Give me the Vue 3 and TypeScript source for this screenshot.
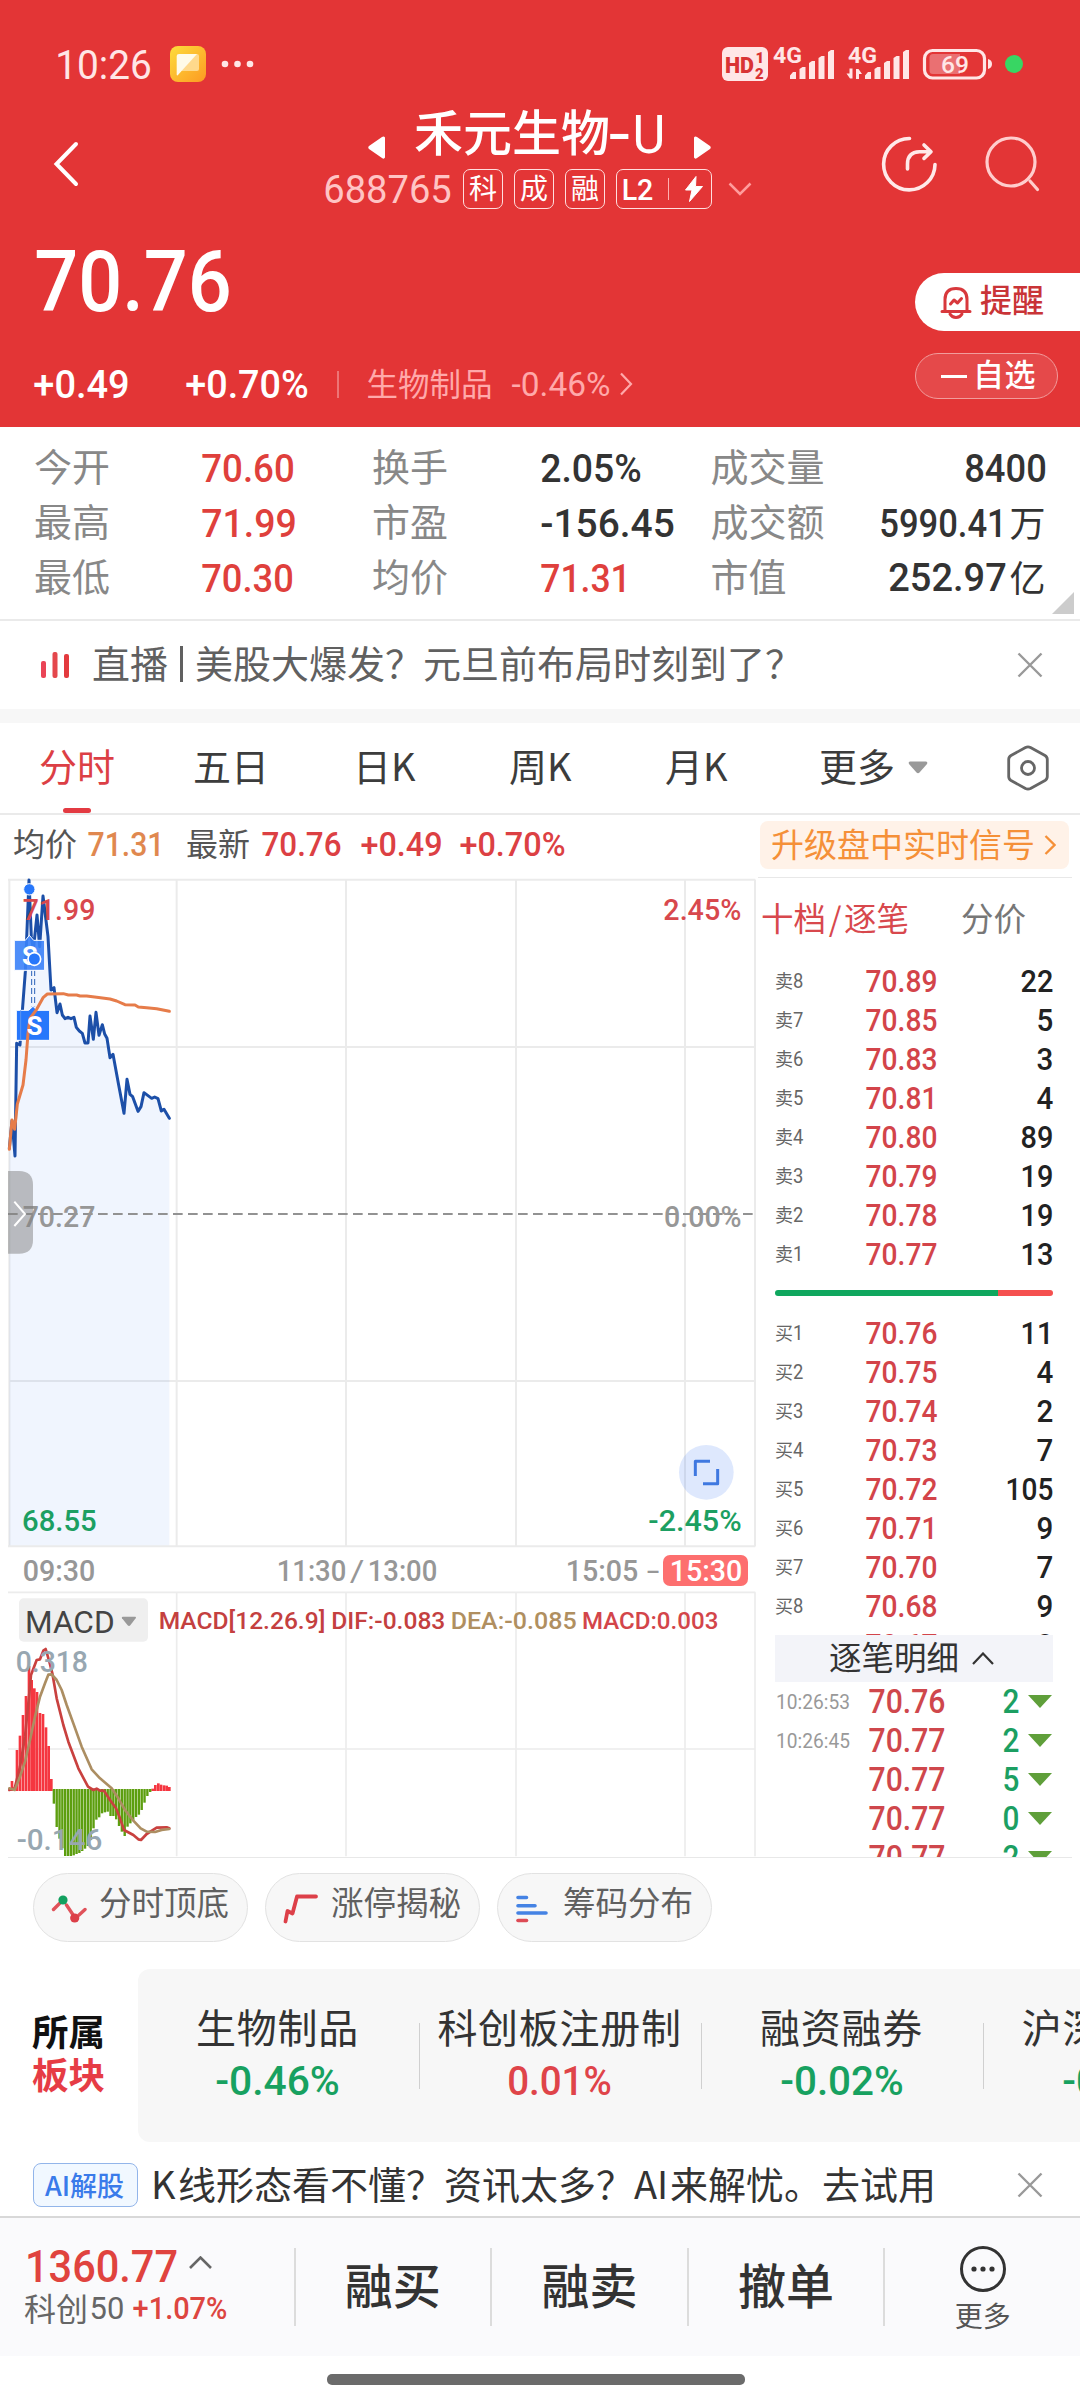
<script setup lang="ts">
import { h, type FunctionalComponent } from 'vue'

interface FigProps {
  t: string
  w: number
  c: number
  b?: number
}

// A figure set to an exact ink width (w) and cap height (c).
const Fig: FunctionalComponent<FigProps> = (p) => {
  const size = p.c / 0.711
  return h(
    'svg',
    { width: p.w, height: p.c, style: 'display:block;overflow:visible;flex:none' },
    [
      h(
        'text',
        {
          x: -0.045 * size,
          y: p.c,
          fill: 'currentColor',
          'font-family': 'Roboto, "Noto Sans CJK SC", sans-serif',
          'font-size': size,
          'font-weight': p.b ?? 500,
          textLength: p.w + 0.09 * size,
          lengthAdjust: 'spacingAndGlyphs',
        },
        p.t,
      ),
    ],
  )
}
Fig.props = ['t', 'w', 'c', 'b']

interface Level {
  side: string
  n: number
  price: string
  vol: string
}

const level = (side: string, n: number, price: string, vol: string): Level => ({ side, n, price, vol })
const sells: Level[] = [
  level('卖', 8, '70.89', '22'),
  level('卖', 7, '70.85', '5'),
  level('卖', 6, '70.83', '3'),
  level('卖', 5, '70.81', '4'),
  level('卖', 4, '70.80', '89'),
  level('卖', 3, '70.79', '19'),
  level('卖', 2, '70.78', '19'),
  level('卖', 1, '70.77', '13'),
]
const buys: Level[] = [
  level('买', 1, '70.76', '11'),
  level('买', 2, '70.75', '4'),
  level('买', 3, '70.74', '2'),
  level('买', 4, '70.73', '7'),
  level('买', 5, '70.72', '105'),
  level('买', 6, '70.71', '9'),
  level('买', 7, '70.70', '7'),
  level('买', 8, '70.68', '9'),
  level('买', 9, '70.67', '8'),
]
const volWidth = (v: string): number => [0, 14, 30, 45][v.length]

const ticks = [
  { time: '10:26:53', price: '70.76', vol: '2' },
  { time: '10:26:45', price: '70.77', vol: '2' },
  { time: '', price: '70.77', vol: '5' },
  { time: '', price: '70.77', vol: '0' },
  { time: '', price: '70.77', vol: '2' },
]

const pricePts =
  '28,1045 36,962 45,1068 50,730 60,735 68,620 76,515 87,240 94,410 100,450 111,345 119,440 129,288 144,410 153,570 162,563 171,638 180,612 187,645 195,656 204,652 213,656 222,652 229,682 238,693 247,700 255,729 264,729 270,648 280,718 288,637 297,706 307,674 314,702 321,715 330,773 339,763 356,855 372,940 381,838 390,883 398,890 414,934 423,920 432,878 455,895 464,891 474,896 484,933 492,928 508,955'
const avgPts =
  '28,1048 36,960 44,988 52,912 69,855 78,780 84,700 90,655 110,628 130,592 142,582 190,581 205,585 230,585 240,588 260,588 290,592 330,597 350,603 375,614 405,615 415,621 440,623 470,626 508,634'

const redBars: [number, number][] = [
  [36, 603], [51, 510], [60, 467], [69, 405], [78, 348], [87, 258], [95, 300], [103, 325], [111, 336],
  [120, 399], [129, 402], [138, 442], [146, 498], [154, 597],
  [458, 626], [466, 615], [475, 610], [483, 614], [492, 616], [500, 617], [508, 621],
]
const greenBottoms = [
  671, 741, 776, 805, 828, 828, 828, 826, 822, 819, 813, 806, 798, 780, 745, 719, 712, 700, 697, 695,
  708, 708, 718, 738, 755, 768, 740, 730, 720, 711, 704, 690, 668, 648, 636,
]
const difPts =
  '28,630 44,625 60,560 75,470 87,350 93,285 110,240 120,238 130,212 137,207 148,245 157,280 170,355 180,395 190,435 205,485 220,525 235,565 264,620 280,630 290,626 300,632 312,632 330,660 348,685 360,715 372,750 400,765 415,778 423,780 440,762 470,743 500,742 508,745'
const deaPts =
  '28,625 44,630 60,590 75,545 90,480 105,410 120,350 135,310 145,284 155,283 170,300 185,330 200,375 220,430 245,500 275,568 300,595 335,625 355,655 375,690 400,722 422,745 440,755 465,756 485,750 508,747'
const gridX = [530, 1038, 1548, 2055]
</script>

<template>
  <div class="page">
    <header class="head">
      <div class="status">
        <Fig t="10:26" :w="93" :c="29" :b="400" class="clock" />
        <svg class="note" width="36" height="36" viewBox="0 0 36 36">
          <defs>
            <linearGradient id="ng" x1="0" y1="0" x2="1" y2="1">
              <stop offset="0" stop-color="#fddc3c" />
              <stop offset="1" stop-color="#fd9a22" />
            </linearGradient>
          </defs>
          <rect width="36" height="36" rx="8" fill="url(#ng)" />
          <path d="M26 8h1a2 2 0 0 1 2 2v13a2 2 0 0 1-2 2H11z" fill="#ffd98c" />
          <path d="M9 8h18L7.500 29.500q-.8 0-.8-1V10q0-2 2.300-2z" fill="#fffbe9" />
        </svg>
        <svg class="dots" width="34" height="8" viewBox="0 0 34 8" fill="#ffe6e6">
          <circle cx="4" cy="4" r="3.300" /><circle cx="16.500" cy="4" r="3.300" /><circle cx="29" cy="4" r="3.300" />
        </svg>
        <svg class="signals" width="304" height="40" viewBox="720 44 304 40" fill="#ffe6e6" font-family="Roboto, sans-serif">
          <rect x="722" y="47" width="46" height="34" rx="6" />
          <text x="725" y="73" font-size="22" font-weight="900" textLength="29" lengthAdjust="spacingAndGlyphs" fill="#d93334">HD</text>
          <text x="755.500" y="63" font-size="15" font-weight="900" fill="#d93334">1</text>
          <text x="755" y="78.500" font-size="15" font-weight="900" fill="#d93334">2</text>
          <text x="773" y="63" font-size="22" font-weight="700" textLength="29" lengthAdjust="spacingAndGlyphs">4G</text>
          <path d="M790 79v-3.500l3-3.500h3v7zM799.500 79V69l3-2h3v12zM809 79V63l3-2h3v18zM818.500 79V58l3-2h3v23zM828 79V52l3-2h3v29z" />
          <text x="848" y="63" font-size="22" font-weight="700" textLength="29" lengthAdjust="spacingAndGlyphs">4G</text>
          <path d="M865 79v-3.500l3-3.500h3v7zM874.500 79V69l3-2h3v12zM884 79V63l3-2h3v18zM893.500 79V58l3-2h3v23zM903 79V52l3-2h3v29z" />
          <path d="M852.500 68.500v10h-2.500l-3.500-5h3v-5zM856 79v-10h2.500l3.500 5h-3v5z" />
          <rect x="924.500" y="50.500" width="60" height="27.500" rx="8" fill="none" stroke="#ffe6e6" stroke-width="3.200" />
          <path d="M933 54h27v20h-27q-3.500 0-3.500-3.500v-13q0-3.500 3.500-3.500z" fill="#ea7072" />
          <path d="M988 59q4 1 4 5t-4 5z" />
          <text x="941" y="73" font-size="24.500" font-weight="500" textLength="28" lengthAdjust="spacingAndGlyphs">69</text>
          <circle cx="1014" cy="64" r="9" fill="#38d663" />
        </svg>
      </div>

      <div class="nav">
        <svg class="back" width="26" height="46" viewBox="0 0 26 46"><path d="M23 3L3.500 23L23 43" fill="none" stroke="#fff" stroke-width="4" stroke-linecap="round" /></svg>
        <div class="title">
          <div class="name">
            <svg width="17" height="23" viewBox="0 0 17 23"><path d="M17 1.500V21.500q-1 2-3 .5L1 13q-1.500-1.500 0-3L14 1q2-1 3 .5z" fill="#fff" /></svg>
            <span class="c nm">禾元生物</span>
            <Fig t="-" :w="19" :c="38" class="dash" /><Fig t="U" :w="28" :c="38" :b="400" class="nu" />
            <svg width="17" height="23" viewBox="0 0 17 23"><path d="M0 1.500V21.500q1 2 3 .5L16 13q1.500-1.500 0-3L3 1q-2-1-3 .5z" fill="#fff" /></svg>
          </div>
          <div class="code">
            <Fig t="688765" :w="125" :c="28" :b="400" class="pale" />
            <span class="tag"><span class="c">科</span></span>
            <span class="tag"><span class="c">成</span></span>
            <span class="tag"><span class="c">融</span></span>
            <span class="tag lv">
              <Fig t="L2" :w="29" :c="21.500" />
              <i></i>
              <svg width="18" height="26" viewBox="0 0 18 26"><path d="M11 .5L.5 14h6.500L4.500 25.500L17.500 10.500H10.500z" fill="#fff" stroke="#fff" stroke-linejoin="round" /></svg>
            </span>
            <svg class="down" width="24" height="14" viewBox="0 0 24 14"><path d="M1.500 1.500L12 12L22.500 1.500" fill="none" stroke="#ff9c9c" stroke-width="2.500" /></svg>
          </div>
        </div>
        <svg class="share" width="58" height="58" viewBox="880 135 58 58" fill="none" stroke="#ffe9e9" stroke-width="3.600" stroke-linecap="round" stroke-linejoin="round">
          <path d="M909.500 138.500A25.700 25.700 0 1 0 935 164.500" />
          <path d="M907.500 169v-5q0-12 12-12.300h10M924 145l7 6.700l-7 6.700" />
        </svg>
        <svg class="find" width="56" height="56" viewBox="985 136 56 56" fill="none" stroke="#ffcdcd" stroke-width="3.200" stroke-linecap="round">
          <circle cx="1011" cy="162" r="24" /><path d="M1030 181L1037.500 189.500" />
        </svg>
      </div>

      <div class="quote">
        <div class="qleft">
          <Fig t="70.76" :w="190" :c="60" />
          <div class="chg">
            <Fig t="+0.49" :w="93" :c="27" />
            <Fig t="+0.70%" :w="120" :c="27" class="pct" />
            <i></i>
            <span class="c sec">生物制品</span>
            <Fig t="-0.46%" :w="96" :c="23" :b="400" class="pink" />
            <svg class="pinkarrow" width="14" height="24" viewBox="0 0 14 24"><path d="M2 1.500L12 12L2 22.500" fill="none" stroke="#ffa9aa" stroke-width="2.200" /></svg>
          </div>
        </div>
        <div class="qright">
          <button class="remind">
            <svg width="32" height="34" viewBox="0 0 32 34" fill="none" stroke="#d8383c" stroke-width="3" stroke-linecap="round" stroke-linejoin="round">
              <path d="M5 26V14.500Q5 3.500 16 3.500T27 14.500V26M2 26.500H30M10 29q2 3.500 6 3.500t6-3.500M10.500 19l3.500-4l3.500 3l4-4.500" />
            </svg>
            <span class="c">提醒</span>
          </button>
          <button class="watch"><i></i><span class="c">自选</span></button>
        </div>
      </div>
    </header>

    <section class="stats">
      <div class="srow">
        <span class="c k">今开</span><span class="v1 red"><Fig t="70.60" :w="90" :c="28" /></span>
        <span class="c k">换手</span><span class="v2"><Fig t="2.05%" :w="98" :c="28" /></span>
        <span class="c k">成交量</span><span class="v3"><Fig t="8400" :w="79" :c="28" /></span>
      </div>
      <div class="srow">
        <span class="c k">最高</span><span class="v1 red"><Fig t="71.99" :w="92" :c="28" /></span>
        <span class="c k">市盈</span><span class="v2"><Fig t="-156.45" :w="131" :c="28" /></span>
        <span class="c k">成交额</span><span class="v3"><Fig t="5990.41" :w="124" :c="27.500" /><span class="c u">万</span></span>
      </div>
      <div class="srow">
        <span class="c k">最低</span><span class="v1 red"><Fig t="70.30" :w="89" :c="28" /></span>
        <span class="c k">均价</span><span class="v2 red"><Fig t="71.31" :w="87" :c="28" /></span>
        <span class="c k">市值</span><span class="v3"><Fig t="252.97" :w="115" :c="28" /><span class="c u">亿</span></span>
      </div>
      <svg class="corner" width="22" height="22"><path d="M22 0V22H0z" fill="#ccc" /></svg>
    </section>

    <section class="live">
      <svg width="29" height="26" viewBox="0 0 29 26">
        <rect x="0" y="9" width="5" height="17" rx="2" fill="#ea4456" /><rect x="11.500" y="0" width="5" height="26" rx="2" fill="#e4474c" /><rect x="23" y="2" width="5" height="24" rx="2" fill="#e33a3e" />
      </svg>
      <span class="c ltxt">直播<i></i>美股大爆发？元旦前布局时刻到了？</span>
      <svg class="close" width="26" height="26" viewBox="0 0 26 26"><path d="M1.500 1.500L24.500 24.500M24.500 1.500L1.500 24.500" stroke="#999" stroke-width="2.400" /></svg>
    </section>
    <div class="band"></div>

    <nav class="tabs">
      <span class="c on">分时</span><span class="c t2">五日</span><span class="c t3">日K</span><span class="c t4">周K</span><span class="c t5">月K</span><span class="c t6">更多</span>
      <svg class="caret" width="20" height="13"><path d="M2 .5H18q2 .5 1 2.500L11.500 11.500q-1.500 1.500-3 0L1 3Q0 1 2 .5z" fill="#999" /></svg>
      <svg class="hex" width="42" height="46" viewBox="0 0 42 46" fill="none" stroke="#666" stroke-width="2.800" stroke-linejoin="round"><path d="M18.500 2.500q2.500-1.300 5 0L38 10.500q2.300 1.400 2.300 4v17q0 2.600-2.300 4L23.500 43.500q-2.500 1.300-5 0L4 35.500q-2.300-1.400-2.300-4v-17q0-2.600 2.300-4z" /><circle cx="21" cy="23" r="6.500" /></svg>
    </nav>

    <section class="info">
      <span class="c">均价</span><Fig t="71.31" :w="74" :c="24" class="i1" />
      <span class="c i2">最新</span><Fig t="70.76" :w="77" :c="24" class="i3" />
      <Fig t="+0.49" :w="79" :c="24" class="i4" /><Fig t="+0.70%" :w="103" :c="24" class="i5" />
      <span class="upgrade"><span class="c">升级盘中实时信号</span><svg width="12" height="20" viewBox="0 0 12 20"><path d="M1.500 1L10.500 10L1.500 19" fill="none" stroke="#f59038" stroke-width="2.300" /></svg></span>
    </section>

    <section class="market">
      <div class="charts">
        <svg class="main" width="758" height="671" viewBox="0 231 2274 2013">
          <g stroke="#ebebeb" stroke-width="6" fill="none">
            <path d="M24 239H2266M28 741H2266M28 1743H2266M24 2239H2266M28 239V2239M2265 239V2239" />
            <path v-for="x in gridX" :key="x" :d="`M${x} 239V2239`" />
          </g>
          <path :d="`M28 2236L${pricePts.replace(/ /g, 'L')}L508 2236z`" fill="#2f75f5" fill-opacity=".07" />
          <path d="M24 1242H2260" stroke="#929292" stroke-width="6" stroke-dasharray="29 16" />
          <polyline :points="pricePts" fill="none" stroke="#1c4fa8" stroke-width="9" stroke-linejoin="round" stroke-linecap="round" />
          <path d="M95 510V619M104 510V619" stroke="#2b62b8" stroke-width="3" stroke-dasharray="18 9" />
          <path d="M43 421H76L88 406L101 421H134V511H43z" fill="#3b82f8" fill-opacity=".9" stroke="#fff" stroke-width="3" />
          <path d="M49 631H86L99 619L111 631H149V721H49z" fill="#2777fb" stroke="#fff" stroke-width="3" />
          <path d="M62 631V721" stroke="#5b93f0" stroke-width="3" />
          <circle cx="88" cy="268" r="17" fill="#2777fb" stroke="#fff" stroke-width="3" />
          <polyline :points="avgPts" fill="none" stroke="#e67c4a" stroke-width="9" stroke-linejoin="round" stroke-linecap="round" />
          <g fill="#fff" font-family="Roboto, sans-serif" font-weight="700" font-size="76">
            <text x="66" y="494">S</text><text x="80" y="704">S</text>
          </g>
          <circle cx="103" cy="477" r="19" fill="#2777fb" stroke="#fff" stroke-width="5" />
          <g font-family="Roboto, sans-serif" font-size="88" font-weight="500">
            <text x="68" y="360" fill="#d8484d" textLength="218" lengthAdjust="spacingAndGlyphs">71.99</text>
            <text x="1990" y="360" fill="#d8484d" textLength="234" lengthAdjust="spacingAndGlyphs">2.45%</text>
            <text x="68" y="1280" fill="#979797" textLength="218" lengthAdjust="spacingAndGlyphs">70.27</text>
            <text x="1992" y="1280" fill="#979797" textLength="233" lengthAdjust="spacingAndGlyphs">0.00%</text>
            <text x="66" y="2193" fill="#1c9f62" textLength="224" lengthAdjust="spacingAndGlyphs">68.55</text>
            <text x="1945" y="2193" fill="#1c9f62" textLength="280" lengthAdjust="spacingAndGlyphs">-2.45%</text>
          </g>
          <circle cx="2119" cy="2017" r="82" fill="#2f6ff0" fill-opacity=".16" />
          <path d="M2086 2028V1984H2130M2153 2007V2051H2109" fill="none" stroke="#3f78e0" stroke-width="9" stroke-linejoin="round" />
          <path d="M24 1113H57Q99 1113 99 1155V1320Q99 1361 57 1361H24z" fill="#808080" fill-opacity=".5" />
          <path d="M43 1205L75 1242L43 1278" fill="none" stroke="#fff" stroke-width="6" />
        </svg>
        <div class="times">
          <Fig t="09:30" :w="70" :c="21" />
          <Fig t="11:30" :w="67" :c="21" class="m1" /><Fig t="/" :w="12" :c="21" :b="400" class="m2" /><Fig t="13:00" :w="67" :c="21" class="m2" />
          <Fig t="15:05" :w="70" :c="21" class="m3" /><Fig t="-" :w="10" :c="21" :b="400" class="m4" />
          <span class="late"><Fig t="15:30" :w="70" :c="21" /></span>
        </div>
        <svg class="macd" width="758" height="266" viewBox="0 33 2274 798">
          <g stroke="#ececec" stroke-width="5" fill="none">
            <path d="M24 37H2266M24 507H2266M2265 37V829" />
            <path v-for="x in gridX" :key="x" :d="`M${x} 37V829`" />
          </g>
          <rect v-for="b in redBars" :key="'r' + b[0]" :x="b[0] - 4" :y="b[1]" width="8" :height="633 - b[1]" fill="#f53640" />
          <rect v-for="(b, i) in greenBottoms" :key="'g' + i" :x="158 + i * 8.5" y="627" width="7.200" :height="b - 627" fill="#5c9e0f" />
          <polyline :points="difPts" fill="none" stroke="#c9413f" stroke-width="8" stroke-linejoin="round" stroke-linecap="round" />
          <polyline :points="deaPts" fill="none" stroke="#ac8e62" stroke-width="8" stroke-linejoin="round" stroke-linecap="round" />
          <rect x="57" y="55" width="387" height="130" rx="14" fill="#efefef" />
          <path d="M368 110H406q4 1 1 5L391 136q-4 4-8 0L366 115q-2-4 2-5z" fill="#999" />
          <g font-family="Roboto, sans-serif">
            <text x="75" y="160" font-size="96" fill="#444" textLength="269" lengthAdjust="spacingAndGlyphs">MACD</text>
            <g font-size="74" font-weight="500">
              <text x="476" y="147" fill="#c4403f" textLength="500" lengthAdjust="spacingAndGlyphs">MACD[12.26.9]</text>
              <text x="994" y="147" fill="#c4403f" textLength="342" lengthAdjust="spacingAndGlyphs">DIF:-0.083</text>
              <text x="1352" y="147" fill="#b08f60" textLength="378" lengthAdjust="spacingAndGlyphs">DEA:-0.085</text>
              <text x="1746" y="147" fill="#d3454a" textLength="409" lengthAdjust="spacingAndGlyphs">MACD:0.003</text>
            </g>
            <g font-size="88" font-weight="500" fill="#98a7b1">
              <text x="47" y="275" textLength="217" lengthAdjust="spacingAndGlyphs">0.318</text>
              <text x="50" y="810" textLength="257" lengthAdjust="spacingAndGlyphs">-0.146</text>
            </g>
          </g>
        </svg>
      </div>

      <div class="book">
        <div class="btabs"><span class="c bon">十档<em>/</em>逐笔</span><span class="c boff">分价</span></div>
        <div class="levels">
          <div v-for="r in sells" :key="'s' + r.n" class="lrow">
            <span class="c side">{{ r.side }}</span><Fig :t="String(r.n)" :w="8.5" :c="14.5" :b="400" class="dim" />
            <span class="price"><Fig :t="r.price" :w="69" :c="22" /></span>
            <span class="vol"><Fig :t="r.vol" :w="volWidth(r.vol)" :c="22" /></span>
          </div>
        </div>
        <div class="ratio"><i></i><b></b></div>
        <div class="levels clip">
          <div v-for="r in buys" :key="'b' + r.n" class="lrow">
            <span class="c side">{{ r.side }}</span><Fig :t="String(r.n)" :w="8.5" :c="14.5" :b="400" class="dim" />
            <span class="price"><Fig :t="r.price" :w="69" :c="22" /></span>
            <span class="vol"><Fig :t="r.vol" :w="volWidth(r.vol)" :c="22" /></span>
          </div>
        </div>
        <div class="detail"><span class="c">逐笔明细</span><svg width="22" height="13" viewBox="0 0 22 13"><path d="M1 12L11 1.500L21 12" fill="none" stroke="#333" stroke-width="2.200" /></svg></div>
        <div class="ticks">
          <div v-for="(k, i) in ticks" :key="i" class="trow">
            <span class="tm"><Fig v-if="k.time" :t="k.time" :w="72" :c="14.5" :b="400" /></span>
            <Fig :t="k.price" :w="74" :c="23" class="tp" />
            <span class="tv"><Fig :t="k.vol" :w="14" :c="23" /></span>
            <svg width="24" height="13"><path d="M0 0H24L12 13z" fill="#5f9f3a" /></svg>
          </div>
        </div>
      </div>
    </section>

    <section class="chips">
      <button class="chip">
        <svg width="36" height="28" viewBox="51 1895 36 28" stroke="#e0525a" stroke-width="3.400" stroke-linecap="round" fill="none"><path d="M53.500 1909.500L61 1902M66.500 1905L72.500 1914M79 1915L85 1909.500" /><circle cx="63" cy="1900" r="4.600" fill="#12a05f" stroke="none" /><circle cx="74.700" cy="1918" r="4.600" fill="#dc3f48" stroke="none" /></svg>
        <span class="c">分时顶底</span>
      </button>
      <button class="chip">
        <svg width="36" height="30" viewBox="286 1893 36 30" stroke="#dd4049" stroke-width="3.800" stroke-linecap="round" stroke-linejoin="round" fill="none"><path d="M288.500 1920.500L290.500 1910L295.500 1912.500L300 1895.500H319" /></svg>
        <span class="c">涨停揭秘</span>
      </button>
      <button class="chip">
        <svg width="36" height="28" viewBox="517 1895 36 28" stroke="#4583e4" stroke-width="3.600" stroke-linecap="round"><path d="M520 1897.500H528.500M520 1905.800H537M520 1913H548" /><path d="M520 1920.500H528.500" stroke="#dd4b55" /></svg>
        <span class="c">筹码分布</span>
      </button>
    </section>

    <section class="sectors">
      <div class="slabel"><span class="c">所属</span><span class="c r">板块</span></div>
      <div class="card">
        <div class="item"><span class="c">生物制品</span><Fig t="-0.46%" :w="121" :c="29" class="green" /></div>
        <div class="item"><span class="c">科创板注册制</span><Fig t="0.01%" :w="101" :c="29" class="rose" /></div>
        <div class="item"><span class="c">融资融券</span><Fig t="-0.02%" :w="120" :c="29" class="green" /></div>
        <div class="item"><span class="c">沪深股通&emsp;</span><Fig t="-0.13%" :w="120" :c="29" class="green" /></div>
      </div>
    </section>

    <section class="ai">
      <span class="badge"><span class="c">AI解股</span></span>
      <span class="c atxt"><em>K</em>线形态看不懂？资讯太多？<em class="ai2">AI</em>来解忧。去试用</span>
      <svg class="close" width="26" height="26" viewBox="0 0 26 26"><path d="M1.500 1.500L24.500 24.500M24.500 1.500L1.500 24.500" stroke="#999" stroke-width="2.400" /></svg>
    </section>

    <footer class="foot">
      <div class="index">
        <div class="ix1"><Fig t="1360.77" :w="149" :c="31" /><svg class="up" width="23" height="13" viewBox="0 0 23 13"><path d="M1 12L11.500 1.500L22 12" fill="none" stroke="#666" stroke-width="2.600" /></svg></div>
        <div class="ix2"><span class="c">科创</span><Fig t="50" :w="32" :c="22" :b="400" class="i50" /><Fig t="+1.07%" :w="92" :c="22" class="i107" /></div>
      </div>
      <div class="act"><span class="c">融买</span></div>
      <div class="act"><span class="c">融卖</span></div>
      <div class="act"><span class="c">撤单</span></div>
      <div class="act more">
        <svg width="48" height="48" viewBox="0 0 48 48"><circle cx="24" cy="24" r="21.500" fill="none" stroke="#333" stroke-width="3" /><g fill="#333"><circle cx="15" cy="24" r="2.600" /><circle cx="24" cy="24" r="2.600" /><circle cx="33" cy="24" r="2.600" /></g></svg>
        <span class="c">更多</span>
      </div>
    </footer>
    <div class="home"><i></i></div>
  </div>
</template>

<style>
body { background: #fff; }
</style>
<style scoped>
.page { width: 1080px; height: 2400px; overflow: hidden; background: #fff; color: #333; font-family: 'Noto Sans CJK SC', sans-serif; display: flex; flex-direction: column; }
.page > * { flex: none; box-sizing: border-box; }
svg { display: block; flex: none; }
i, em { font-style: normal; }
button { border: 0; padding: 0; margin: 0; background: none; font: inherit; color: inherit; box-sizing: border-box; display: flex; align-items: center; }
.c { display: block; flex: none; line-height: 1; margin-top: -0.11em; white-space: nowrap; }

.head { height: 427px; background: #e33536; color: #fff; }
.status { height: 100px; padding: 28px 56px 0 57px; box-sizing: border-box; display: flex; align-items: center; color: #ffe6e6; }
.note { margin-left: 20px; }
.dots { margin-left: 15px; }
.signals { margin-left: auto; }
.nav { height: 128px; display: flex; align-items: center; }
.back { margin-left: 53px; }
.title { margin-left: 246px; width: 430px; margin-top: -11px; }
.name { display: flex; align-items: center; height: 48px; padding-left: 43px; }
.name > svg:first-child, .name > svg:last-child { position: relative; top: 15px; }
.nm { font-size: 49px; font-weight: 500; margin-left: 29px; width: 196px; }
.dash { margin-left: 0; }
.nu { margin-left: 6px; margin-right: 31px; }
.name > .nu, .name > .dash { position: relative; top: 1px; }
.code { display: flex; align-items: center; height: 40px; margin-top: 12px; }
.pale { color: #ffc4c4; margin-right: 13px; }
.tag { width: 40px; height: 40px; border: 1.500px solid #ffdede; border-radius: 7px; box-sizing: border-box; display: flex; align-items: center; justify-content: center; font-size: 28px; margin-right: 11px; }
.lv { width: 96px; justify-content: space-between; padding: 0 8px 0 6px; margin-right: 16px; }
.lv i { width: 1.500px; height: 22px; background: #ffb0b0; }
.share { margin-left: 125px; }
.find { margin-left: 47px; }
.quote { display: flex; justify-content: space-between; padding-left: 38px; }
.qleft { padding-top: 23px; }
.chg { display: flex; align-items: center; margin-top: 57px; margin-left: -3px; height: 32px; }
.pct { margin-left: 59px; }
.chg i { width: 1.500px; height: 27px; background: #ed7576; margin-left: 30px; }
.sec { font-size: 31.500px; margin-left: 28px; color: #ffa9aa; }
.pink { color: #ffa9aa; margin-left: 20px; }
.pinkarrow { margin-left: 10px; }
.qright { width: 165px; padding-top: 45px; }
.remind { width: 165px; height: 58px; border-radius: 29px 0 0 29px; background: #fff; color: #c93437; padding-left: 25px; font-size: 32px; font-weight: 500; }
.remind .c { margin-left: 8px; margin-top: -8px; }
.watch { width: 143px; height: 46px; border: 1.500px solid #f19c9c; border-radius: 23px; background: rgba(255, 255, 255, 0.1); margin-top: 22px; padding-left: 25px; font-size: 31px; font-weight: 500; }
.watch i { width: 26px; height: 3px; background: #fff; }
.watch .c { margin-left: 6px; margin-top: -8px; letter-spacing: 0.500px; }

.stats { height: 194px; padding-top: 13px; border-bottom: 2px solid #eaeaea; position: relative; }
.srow { height: 55px; display: grid; grid-template-columns: 169px 169px 169.500px 169px 135px 199px; padding-left: 34px; align-items: center; }
.srow .v1, .srow .v2 { position: relative; }
.k { font-size: 38px; color: #888; }
.v1, .v2, .v3 { display: flex; align-items: center; }
.v3 { justify-content: flex-end; }
.u { font-size: 36px; margin-left: 4px; margin-right: -1px; }
.red { color: #df403c; }
.corner { position: absolute; right: 6px; bottom: 5px; }

.live { height: 88px; display: flex; align-items: center; padding: 0 37px 0 41px; color: #606060; }
.ltxt { font-size: 38px; margin-left: 22px; display: flex; }
.ltxt i { width: 3px; height: 36px; margin: 3px 12px 0; background: #606060; }
.close { margin-left: auto; }
.band { height: 14px; background: #f7f7f7; }

.tabs { height: 92px; border-bottom: 2px solid #eaeaea; display: flex; align-items: center; padding: 0 0 2px 39px; font-size: 38px; color: #3c3c3c; position: relative; }
.tabs .c { width: 76px; }
.on { color: #dc3f45; }
.on::after { content: ''; position: absolute; left: 63px; bottom: 0; width: 28px; height: 5px; border-radius: 3px; background: #e33a42; }
.tabs .t2 { margin-left: 78px; }
.tabs .t3 { margin-left: 84px; }
.tabs .t4 { margin-left: 80px; }
.tabs .t5 { margin-left: 80px; }
.tabs .t6 { margin-left: 78px; }
.caret { margin-left: 13px; }
.hex { margin-left: 79px; position: relative; top: 1px; }

.info { height: 62px; display: flex; align-items: center; padding: 0 11px 0 13px; font-size: 32px; color: #555; padding-bottom: 4px; }
.i1 { color: #e0884f; margin-left: 12px; }
.i2 { margin-left: 23px; }
.i3 { margin-left: 13px; }
.i4 { margin-left: 22px; }
.i5 { margin-left: 20px; }
.i3, .i4, .i5 { color: #dc4043; }
.upgrade { margin-left: auto; margin-top: 2px; width: 309px; height: 48px; border-radius: 8px; background: #fff2e8; color: #f59038; font-size: 33px; display: flex; align-items: center; padding-left: 11px; box-sizing: border-box; }
.upgrade svg { margin-left: 9px; }

.market { height: 981px; display: flex; overflow: hidden; position: relative; }
.market::after { content: ''; position: absolute; left: 8px; right: 8px; bottom: 0; height: 1.500px; background: #e8e8e8; }
.charts { width: 758px; }
.times { height: 43px; display: flex; align-items: center; padding-left: 24px; padding-top: 2px; box-sizing: border-box; color: #979797; }
.m1 { margin-left: 184px; }
.m2 { margin-left: 6px; }
.m3 { margin-left: 131px; }
.m4 { margin-left: 11px; }
.late { width: 85px; height: 31px; border-radius: 7px; background: #fd6f6f; color: #fff; display: flex; align-items: center; justify-content: center; margin-left: 5px; }
.book { width: 314px; border-top: 1.500px solid #e8e8e8; box-sizing: border-box; height: 981px; padding-left: 3px; }
.btabs { height: 83px; display: flex; align-items: center; font-size: 32.500px; }
.bon { color: #d8484d; width: 200px; display: flex; }
.bon em { width: 18px; text-align: center; }
.boff { color: #777; }
.levels { padding-left: 14px; }
.lrow { height: 39px; display: flex; align-items: center; width: 277px; }
.side { font-size: 18px; color: #666; margin-right: 1px; }
.dim { color: #666; }
.price { width: 69px; margin-left: 64px; color: #d3444a; }
.vol { margin-left: auto; color: #222; }
.ratio { display: flex; height: 6px; width: 278px; margin: 17px 0 17px 14px; border-radius: 3px; overflow: hidden; }
.ratio i { width: 223px; background: #0fa75e; }
.ratio b { flex: 1; background: #f5504f; }
.clip { height: 322px; overflow: hidden; }
.detail { margin-left: 14px; width: 278px; height: 47px; background: #f3f4f9; display: flex; align-items: center; padding-left: 54px; box-sizing: border-box; font-size: 32.500px; color: #333; }
.detail svg { margin-left: 13px; }
.ticks { padding-left: 16px; height: 175px; overflow: hidden; }
.trow { height: 39px; display: flex; align-items: center; width: 275px; }
.tm { width: 93px; color: #999; }
.tp { color: #cf474c; }
.tv { color: #1c9f62; width: 14px; margin-right: auto; margin-left: 60px; }

.chips { display: flex; gap: 17px; padding: 15px 0 0 33px; }
.chip { width: 215px; height: 69px; border-radius: 35px; border: 1.500px solid #e2e2e2; background: #f7f7f7; padding-left: 17px; font-size: 32.500px; color: #606060; }
.chip svg { position: relative; top: 1px; }
.chip .c { margin-left: 12px; margin-top: -13px; }

.sectors { height: 173px; margin-top: 27px; display: flex; }
.slabel { width: 138px; flex: none; padding: 48px 0 0 32px; box-sizing: border-box; font-size: 36.500px; font-weight: 700; color: #111; }
.slabel .c + .c { margin-top: 6px; }
.r { color: #e63c45; }
.card { width: 942px; background: #f7f7f7; border-radius: 12px 0 0 12px; display: flex; overflow: hidden; }
.item { width: 282px; flex: none; display: flex; flex-direction: column; align-items: center; padding-top: 41.500px; padding-right: 3px; font-size: 40px; position: relative; box-sizing: border-box; }
.item .c { letter-spacing: 0.700px; margin-bottom: 20px; margin-top: -4.400px; }
.item:not(:last-child)::after { content: ''; position: absolute; right: 0; top: 54px; height: 66px; width: 1.500px; background: #d0d0d0; }
.green { color: #17a160; }
.rose { color: #df4449; }

.ai { height: 76px; display: flex; align-items: center; padding: 12px 37px 0 33px; border-bottom: 2px solid #d8d8d8; }
.badge { width: 105px; height: 44px; border-radius: 8px; border: 1.500px solid #92b5ea; background: #f1f8ff; box-sizing: border-box; display: flex; align-items: center; justify-content: center; color: #3a7bea; font-size: 27px; font-weight: 500; padding-top: 1px; }
.badge .c { margin-left: -2px; }
.atxt { font-size: 38px; margin-left: 13px; display: flex; }
.atxt em { width: 27px; }
.atxt .ai2 { width: 36px; }

.foot { height: 138px; background: #fafafc; display: flex; align-items: center; }
.index { width: 293.500px; flex: none; padding-left: 24px; box-sizing: border-box; }
.ix1 { display: flex; align-items: center; color: #e0433e; padding-left: 3px; }
.ix1 .up { margin-left: 13px; margin-top: -8px; }
.ix2 { display: flex; align-items: center; color: #666; font-size: 32px; margin-top: 12px; }
.i50 { margin-left: 3px; }
.i107 { margin-left: 11px; color: #dd4540; }
.act { width: 197.300px; height: 78px; border-left: 2px solid #dcdcdc; display: flex; align-items: center; justify-content: center; font-size: 48px; font-weight: 500; box-sizing: border-box; }
.act:not(.more) .c { margin-top: -8px; }
.more { flex-direction: column; font-size: 28px; font-weight: 400; color: #555; }
.more .c { margin-top: 8px; }
.home { height: 45px; display: flex; justify-content: center; padding: 18px 8px 0 0; }
.home i { width: 418px; height: 10.500px; border-radius: 5px; background: #6b6b6b; }
</style>
